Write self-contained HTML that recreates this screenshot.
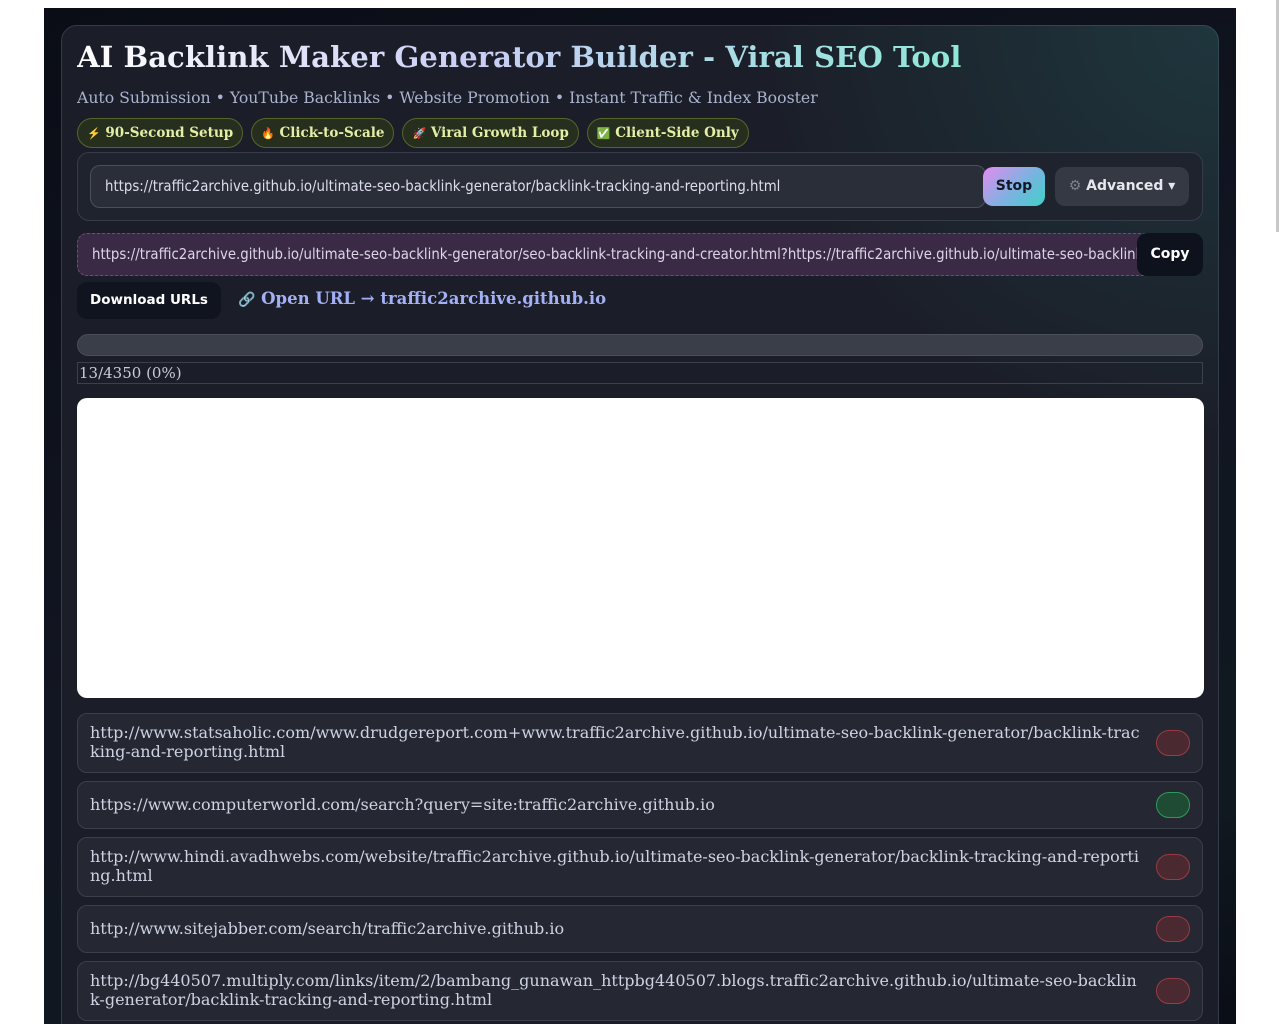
<!DOCTYPE html>
<html><head><meta charset="utf-8"><style>
*{box-sizing:border-box;margin:0;padding:0}
body{width:1280px;height:1024px;background:#fff;overflow:hidden;font-family:"DejaVu Serif",serif;position:relative}
.wrap{position:absolute;left:44px;top:8px;width:1192px;height:1016px;overflow:hidden;background:linear-gradient(160deg,#0a0d16 0%,#121622 50%,#101820 85%,#0a0d16 100%)}
.card{position:absolute;left:17px;top:17px;width:1158px;height:1040px;border:1px solid #333a48;border-radius:16px;background:#1b1e28}
.card2{position:absolute;left:17px;top:17px;width:1158px;height:1040px;border-radius:16px;background:radial-gradient(ellipse at 100% 0%,rgba(40,110,110,.3),transparent 28%)}
h1{position:absolute;left:33px;top:15px;font-size:29.2px;font-weight:bold;white-space:nowrap;background:linear-gradient(90deg,#fff 0%,#c9cdf5 45%,#8fe8d8 100%);-webkit-background-clip:text;color:transparent}
.sub{position:absolute;left:33px;top:63px;font-size:15.7px;color:#aab3cf;white-space:nowrap}
.badges{position:absolute;left:33px;top:93px;display:flex;gap:8px}
.b{height:30px;border-radius:15px;border:1px solid #56652e;background:#262f1e;color:#e3eea6;font-weight:bold;font-size:13.5px;padding:0 9px;line-height:28px;white-space:nowrap}
.b i{font-style:normal;font-size:11px}
.panel{position:absolute;left:33px;top:127px;width:1126px;height:69px;border:1px solid #363c4a;border-radius:12px;background:#1f232e}
.inp{position:absolute;left:12px;top:12px;width:896px;height:43px;border:1px solid #4a4f5c;border-radius:10px;background:#2a2e38;color:#dde;font-family:"DejaVu Sans Condensed","DejaVu Sans",sans-serif;font-size:14.8px;line-height:41px;padding-left:14px;white-space:nowrap;overflow:hidden}
.stop{position:absolute;left:905px;top:14px;width:62px;height:39px;border-radius:10px;background:linear-gradient(135deg,#e38cf0,#7ab3e0 55%,#3fd0c8);font-family:"DejaVu Sans",sans-serif;font-weight:bold;font-size:14px;color:#141826;text-align:center;line-height:39px}
.adv{position:absolute;left:977px;top:14px;width:134px;height:39px;border-radius:10px;background:#343944;font-family:"DejaVu Sans",sans-serif;font-weight:bold;font-size:14px;color:#e6e8ee;text-align:center;line-height:39px}
.adv span{color:#7d828e}
.out{position:absolute;left:33px;top:208px;width:1070px;height:43px;border:1px dashed #6a5078;border-radius:10px 0 0 10px;background:#3a2a46;color:#dcd6e6;font-family:"DejaVu Sans Condensed","DejaVu Sans",sans-serif;font-size:14.8px;line-height:41px;padding-left:14px;white-space:nowrap;overflow:hidden}
.copy{position:absolute;left:1093px;top:208px;width:66px;height:43px;border-radius:10px;background:#0e121d;font-family:"DejaVu Sans",sans-serif;font-weight:bold;font-size:14px;color:#fff;text-align:center;line-height:43px}
.dl{position:absolute;left:33px;top:257px;width:144px;height:37px;border-radius:10px;background:#10141f;font-family:"DejaVu Sans",sans-serif;font-weight:bold;font-size:13.5px;color:#fff;text-align:center;line-height:37px}
.open{position:absolute;left:194px;top:264px;font-size:16.5px;font-weight:bold;color:#a3b0f5;white-space:nowrap}
.open span{color:#9aa0b0;font-weight:normal;font-size:14px}
.prog{position:absolute;left:33px;top:309px;width:1126px;height:22px;border-radius:11px;background:#3a3e49;border:1px solid #4a4e59}
.cnt{position:absolute;left:33px;top:337px;width:1126px;height:22px;border:1px solid #3c404c;color:#c9ccd6;font-size:15px;line-height:20px;padding-left:1px}
.white{position:absolute;left:33px;top:373px;width:1127px;height:300px;border-radius:10px;background:#fff}
.it{position:absolute;left:33px;width:1126px;border:1px solid #3b3f4b;border-radius:10px;background:#252832;color:#cdd3e3;font-size:16px;line-height:19px;padding:9px 60px 0 12px;word-break:break-all}
.pill{position:absolute;right:12px;width:34px;height:26px;border-radius:13px;background:#4a2a30;border:1px solid #9a3a42}
.pill.g{background:#1f4a34;border-color:#2e9a5a}
.sb{position:absolute;left:1276px;top:0;width:3px;height:232px;background:#c8c8c8}
</style></head><body>
<div class="sb"></div>
<div class="wrap">
<div class="card"></div><div class="card2"></div>
<div style="position:absolute;left:0;top:17px;width:1192px;height:1000px">
<h1>AI Backlink Maker Generator Builder - Viral SEO Tool</h1>
<div class="sub">Auto Submission • YouTube Backlinks • Website Promotion • Instant Traffic &amp; Index Booster</div>
<div class="badges"><div class="b"><i>⚡</i> 90-Second Setup</div><div class="b"><i>🔥</i> Click-to-Scale</div><div class="b"><i>🚀</i> Viral Growth Loop</div><div class="b"><i>✅</i> Client-Side Only</div></div>
<div class="panel">
<div class="inp">https://traffic2archive.github.io/ultimate-seo-backlink-generator/backlink-tracking-and-reporting.html</div>
<div class="stop">Stop</div>
<div class="adv"><span>⚙</span> Advanced ▾</div>
</div>
<div class="out">https://traffic2archive.github.io/ultimate-seo-backlink-generator/seo-backlink-tracking-and-creator.html?https://traffic2archive.github.io/ultimate-seo-backlink-generator/</div>
<div class="copy">Copy</div>
<div class="dl">Download URLs</div>
<div class="open"><span>🔗</span> Open URL → traffic2archive.github.io</div>
<div class="prog"></div>
<div class="cnt">13/4350 (0%)</div>
<div class="white"></div>
<div class="it" style="top:688px;height:60px">http://www.statsaholic.com/www.drudgereport.com+www.traffic2archive.github.io/ultimate-seo-backlink-generator/backlink-tracking-and-reporting.html<div class="pill" style="top:16px"></div></div>
<div class="it" style="top:756px;height:48px;padding-top:13px">https://www.computerworld.com/search?query=site:traffic2archive.github.io<div class="pill g" style="top:10px"></div></div>
<div class="it" style="top:812px;height:60px">http://www.hindi.avadhwebs.com/website/traffic2archive.github.io/ultimate-seo-backlink-generator/backlink-tracking-and-reporting.html<div class="pill" style="top:16px"></div></div>
<div class="it" style="top:880px;height:48px;padding-top:13px">http://www.sitejabber.com/search/traffic2archive.github.io<div class="pill" style="top:10px"></div></div>
<div class="it" style="top:936px;height:60px">http://bg440507.multiply.com/links/item/2/bambang_gunawan_httpbg440507.blogs.traffic2archive.github.io/ultimate-seo-backlink-generator/backlink-tracking-and-reporting.html<div class="pill" style="top:16px"></div></div>
</div>
</div>
</body></html>
